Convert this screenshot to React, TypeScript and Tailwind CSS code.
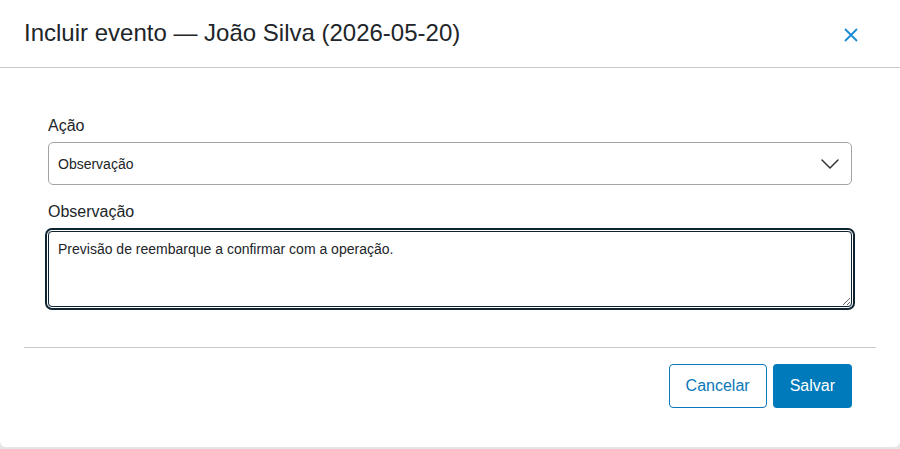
import React from 'react'

const FONT = { fontFamily: '"Liberation Sans", Arial, sans-serif' }

function Chevron() {
  return (
    <svg width="18" height="10" viewBox="0 0 18 10" fill="none" aria-hidden>
      <path d="M1 1l8 8 8-8" stroke="#333" strokeWidth="1.5" strokeLinecap="round" strokeLinejoin="round" />
    </svg>
  )
}

export default function App() {
  return (
    <div className="min-h-screen bg-[#e6e6e6]" style={FONT}>
      <div className="bg-white w-[900px] rounded-b-md">
        {/* header */}
        <div className="h-[68px] border-b border-[#c8c8c8] flex items-center justify-between pl-6 pr-[38px]">
          <h1 className="text-[24px] text-[#212529] leading-none pb-[1px]">Incluir evento — João Silva (2026-05-20)</h1>
          <button className="p-1 mt-[2px]" aria-label="Fechar">
            <svg width="14" height="14" viewBox="0 0 14 14" aria-hidden>
              <path d="M1 1l12 12M13 1L1 13" stroke="#1a8ad4" strokeWidth="1.8" />
            </svg>
          </button>
        </div>

        {/* body */}
        <div className="px-12 pt-[46px] pb-[40px]">
          <label className="block text-base leading-6 text-[#212529] mb-1">Ação</label>
          <div className="h-[43px] border border-[#a3a3a3] rounded-[5px] flex items-center justify-between pl-[9px] pr-[12px] text-sm text-[#212529]">
            <span>Observação</span>
            <Chevron />
          </div>

          <label className="block text-base leading-6 text-[#212529] mt-[15px] mb-[7px]">Observação</label>
          <textarea
            defaultValue="Previsão de reembarque a confirmar com a operação."
            className="block w-full h-[76px] border border-[#0f2433] rounded-[4px] ring-2 ring-[#0f2433] ring-offset-1 outline-none px-[9px] py-[9px] text-sm leading-4 text-[#212529]"
            style={FONT}
          />
        </div>

        {/* footer */}
        <div className="mx-6 border-t border-[#c8c8c8] pt-4 pb-[39px] pr-6 flex justify-end gap-[6px]">
          <button className="h-[44px] px-4 border border-[#0a78b8] rounded-[4px] text-base text-[#0a78b8] bg-white">Cancelar</button>
          <button className="h-[44px] px-[17px] rounded-[4px] text-base text-white bg-[#007aba]">Salvar</button>
        </div>
      </div>
    </div>
  )
}
